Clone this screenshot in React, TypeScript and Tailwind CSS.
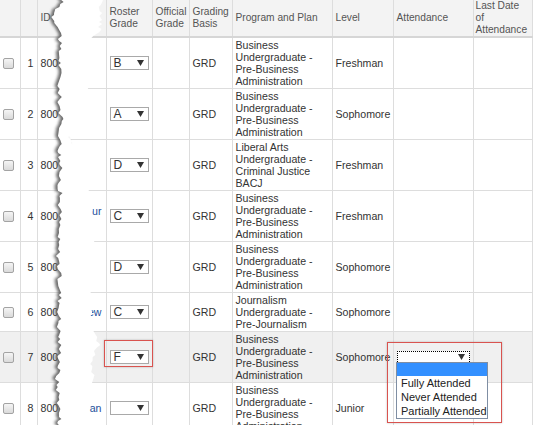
import React from "react";

type Row = {
  n: number;
  grade: string;
  plan: string[];
  level: string;
  name?: string;
  nameClass?: string;
  active?: boolean;
};

const biz = ["Business", "Undergraduate -", "Pre-Business", "Administration"];

const rows: Row[] = [
  { n: 1, grade: "B", plan: biz, level: "Freshman" },
  { n: 2, grade: "A", plan: biz, level: "Sophomore" },
  { n: 3, grade: "D", plan: ["Liberal Arts", "Undergraduate -", "Criminal Justice", "BACJ"], level: "Freshman" },
  { n: 4, grade: "C", plan: biz, level: "Freshman", name: "ur", nameClass: "-mt-[10px]" },
  { n: 5, grade: "D", plan: biz, level: "Sophomore" },
  { n: 6, grade: "C", plan: ["Journalism", "Undergraduate -", "Pre-Journalism"], level: "Sophomore", name: "ew" },
  { n: 7, grade: "F", plan: biz, level: "Sophomore", active: true },
  { n: 8, grade: "", plan: biz, level: "Junior", name: "an" },
];

function Caret() {
  return (
    <svg width="7" height="6" viewBox="0 0 7 6">
      <path d="M0 0h7L3.5 6z" fill="#333" />
    </svg>
  );
}

function GradeSelect({ v }: { v: string }) {
  return (
    <div className="flex h-[14px] w-[39px] items-center justify-between border border-[#a9a9a9] bg-white pl-[3px] pr-[4px] text-[12px] leading-none text-[#333]">
      <span>{v}</span>
      <Caret />
    </div>
  );
}

function Checkbox() {
  return (
    <div className="ml-[3px] h-[11px] w-[11px] rounded-[2px] border border-[#a3a3a3] bg-linear-to-b from-[#f5f5f5] to-[#dadada]" />
  );
}

// torn paper strip that hides the name column
function rnd(seed: number) {
  let s = seed;
  return () => {
    s = (s * 9301 + 49297) % 233280;
    return s / 233280;
  };
}

function interp(pts: number[][], y: number) {
  for (let i = 0; i < pts.length - 1; i++) {
    const [y0, x0] = pts[i];
    const [y1, x1] = pts[i + 1];
    if (y >= y0 && y <= y1) return x0 + ((x1 - x0) * (y - y0)) / (y1 - y0);
  }
  return pts[pts.length - 1][1];
}

const leftBase = [
  [-5, 63], [4, 61], [12, 55], [18, 53], [26, 59], [34, 61], [45, 59], [60, 60], [90, 59], [120, 61],
  [150, 60], [180, 60], [214, 60], [240, 58], [270, 59], [300, 60], [330, 59], [360, 60], [380, 57], [400, 59], [430, 60],
];
const rightBase = [
  [-5, 101], [33, 100], [38, 92], [60, 82], [86, 88], [110, 82], [137, 70], [160, 78], [188, 89], [200, 91],
  [214, 91], [239, 94], [260, 86], [290, 89], [312, 90], [330, 93], [346, 99], [360, 91], [381, 94], [407, 89], [430, 91],
];

function edge(base: number[][], seed: number, amp: number) {
  const r = rnd(seed);
  const out: [number, number][] = [];
  for (let y = -5; y <= 430; y += 2 + Math.floor(r() * 3)) {
    out.push([interp(base, y) + (r() * 2 - 1) * amp, y]);
  }
  return out;
}

const left = edge(leftBase, 17, 2.6);
const right = edge(rightBase, 91, 2.2);

function TornStrip() {
  const white =
    "M" +
    left.map(([x, y]) => `${x.toFixed(1)},${y}`).join(" L") +
    " L" +
    [...right].reverse().map(([x, y]) => `${x.toFixed(1)},${y}`).join(" L") +
    " Z";
  const shade =
    "M" +
    left.map(([x, y]) => `${(x - 2.8).toFixed(1)},${y}`).join(" L") +
    " L" +
    [...left].reverse().map(([x, y]) => `${(x + 8).toFixed(1)},${y}`).join(" L") +
    " Z";
  return (
    <svg className="pointer-events-none absolute left-0 top-0" width="535" height="425" viewBox="0 0 535 425">
      <defs>
        <filter id="blur" x="-50%" y="-5%" width="200%" height="110%">
          <feGaussianBlur stdDeviation="1.7" />
        </filter>
      </defs>
      <path d={shade} fill="#5a5a5a" opacity="0.9" filter="url(#blur)" />
      <path d={white} fill="#ffffff" />
    </svg>
  );
}

export default function App() {
  const th = "border border-[#dddddd] bg-[#f3f3f3] border-b-2 border-b-[#d6d6d6] text-left align-middle font-normal leading-[12px] text-[10.2px] text-[#555]";
  const td = "border border-[#dddddd] py-[1px] align-middle leading-[12px] text-[10.6px] text-[#333]";
  return (
    <div className="relative h-[425px] w-[535px] overflow-hidden bg-white font-['Liberation_Sans',Arial,sans-serif]">
      <table className="w-[532px] table-fixed border-collapse">
        <colgroup>
          <col className="w-[20px]" />
          <col className="w-[17px]" />
          <col className="w-[69px]" />
          <col className="w-[46px]" />
          <col className="w-[37px]" />
          <col className="w-[43px]" />
          <col className="w-[100px]" />
          <col className="w-[61px]" />
          <col className="w-[80px]" />
          <col className="w-[59px]" />
        </colgroup>
        <thead>
          <tr className="h-[32px]">
            <th className={th + " border-l-0 border-t-0"}></th>
            <th className={th + " border-t-0"}></th>
            <th className={th + " border-t-0 px-[3px]"}>ID</th>
            <th className={th + " border-t-0 px-[3px]"}>Roster<br />Grade</th>
            <th className={th + " border-t-0 px-[3px]"}>Official<br />Grade</th>
            <th className={th + " border-t-0 px-[3px]"}>Grading<br />Basis</th>
            <th className={th + " border-t-0 px-[3px]"}>Program and Plan</th>
            <th className={th + " border-t-0 px-[3px]"}>Level</th>
            <th className={th + " border-t-0 px-[3px]"}>Attendance</th>
            <th className={th + " border-t-0 px-[2px] leading-[10.7px]"}>Last Date<br />of<br />Attendance</th>
          </tr>
        </thead>
        <tbody>
          {rows.map((r) => (
            <tr key={r.n} className={r.active ? "bg-[#f0f0f0]" : "bg-white"}>
              <td className={td + " border-l-0"}>
                <Checkbox />
              </td>
              <td className={td + " pr-[3px] text-right"}>{r.n}</td>
              <td className={td + " overflow-hidden pl-[3px] pr-[4px]"}>
                <div className="flex items-center justify-between whitespace-nowrap">
                  <span>800</span>
                  {r.name && <span className={"text-[#1d4f9a] " + (r.nameClass ?? "")}>{r.name}</span>}
                </div>
              </td>
              <td className={td + " px-[3px]"}>
                <GradeSelect v={r.grade} />
              </td>
              <td className={td}></td>
              <td className={td + " px-[3px]"}>GRD</td>
              <td className={td + " px-[3px]"}>
                {r.plan.map((l, i) => (
                  <div key={i}>{l}</div>
                ))}
              </td>
              <td className={td + " px-[3px]"}>{r.level}</td>
              <td className={td + " px-[3px]"}>
                {r.active && (
                  <div className="flex h-[13px] w-[73px] items-center justify-end border border-dotted border-black bg-white pr-[4px]">
                    <Caret />
                  </div>
                )}
              </td>
              <td className={td}></td>
            </tr>
          ))}
        </tbody>
      </table>

      <TornStrip />

      {/* highlight around the F grade */}
      <div className="pointer-events-none absolute left-[104px] top-[340px] h-[27px] w-[49px] border border-[#d9534f] shadow-[0_0_2px_rgba(0,0,0,0.25)]" />

      {/* highlight around the attendance dropdown */}
      <div className="pointer-events-none absolute left-[387px] top-[342px] h-[81px] w-[115px] border border-[#d9534f] shadow-[0_0_2px_rgba(0,0,0,0.25)]" />

      <div className="absolute left-[396px] top-[362px] w-[92px] border border-[#7f8ea3] bg-white text-[11px] leading-[14px] text-[#222]">
        <div className="h-[13px] bg-[#3390ff]" />
        <div className="pl-[4px]">Fully Attended</div>
        <div className="pl-[4px]">Never Attended</div>
        <div className="pl-[4px]">Partially Attended</div>
      </div>
    </div>
  );
}
